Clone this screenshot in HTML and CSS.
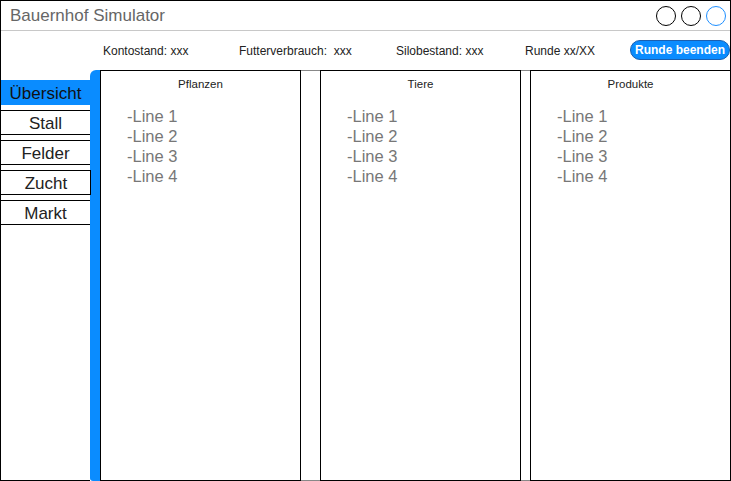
FILE: index.html
```html
<!DOCTYPE html>
<html lang="de">
<head>
<meta charset="utf-8">
<title>Bauernhof Simulator</title>
<link rel="stylesheet" href="styles.css">
</head>
<body>
<div class="frame">
  <header class="titlebar">
    <span class="title">Bauernhof Simulator</span>
    <div class="circles">
      <span class="circle"></span>
      <span class="circle"></span>
      <span class="circle blue"></span>
    </div>
  </header>
  <div class="stats">
    <span class="stat s1">Kontostand: xxx</span>
    <span class="stat s2">Futterverbrauch:&nbsp; xxx</span>
    <span class="stat s3">Silobestand: xxx</span>
    <span class="stat s4">Runde xx/XX</span>
    <button class="end-btn">Runde beenden</button>
  </div>
  <div class="main">
    <nav class="sidebar">
      <div class="nav-item active">Übersicht</div>
      <div class="nav-item">Stall</div>
      <div class="nav-item">Felder</div>
      <div class="nav-item boxed">Zucht</div>
      <div class="nav-item">Markt</div>
    </nav>
    <div class="bluebar"></div>
    <div class="content">
      <section class="panel p1">
        <div class="panel-title">Pflanzen</div>
        <ul class="lines"><li>-Line 1</li><li>-Line 2</li><li>-Line 3</li><li>-Line 4</li></ul>
      </section>
      <section class="panel p2">
        <div class="panel-title">Tiere</div>
        <ul class="lines"><li>-Line 1</li><li>-Line 2</li><li>-Line 3</li><li>-Line 4</li></ul>
      </section>
      <section class="panel p3">
        <div class="panel-title">Produkte</div>
        <ul class="lines"><li>-Line 1</li><li>-Line 2</li><li>-Line 3</li><li>-Line 4</li></ul>
      </section>
    </div>
  </div>
</div>
</body>
</html>
```
FILE: styles.css
```css
* { box-sizing: border-box; }
html, body { margin: 0; padding: 0; background: #fff; }
body { font-family: "Liberation Sans", Arial, sans-serif; }

.frame {
  width: 731px;
  height: 481px;
  border: 1px solid #000;
  border-bottom: none;
  display: flex;
  flex-direction: column;
  overflow: hidden;
}

.titlebar {
  height: 30px;
  border-bottom: 1px solid #c8c8c8;
  display: flex;
  align-items: center;
  justify-content: space-between;
  padding: 0 4px 0 9px;
  flex: none;
}
.title { font-size: 17px; color: #666; padding-top: 1px; }
.circles { display: flex; gap: 5px; padding-top: 1px; }
.circle {
  width: 20px; height: 20px;
  border: 1px solid #000;
  border-radius: 50%;
  display: block;
}
.circle.blue { border-color: #1e8fff; }

.stats {
  height: 39px;
  flex: none;
  display: flex;
  align-items: center;
  padding-left: 102px;
  font-size: 12px;
  color: #222;
}
.stat { display: block; }
.s1 { width: 136px; }
.s2 { width: 157px; }
.s3 { width: 129px; }
.s4 { width: 105px; }
.end-btn {
  width: 100px;
  height: 20px;
  border-radius: 10px;
  border: 1px solid #1a5fb0;
  background: #0a8cff;
  color: #fff;
  font-family: "Liberation Sans", Arial, sans-serif;
  font-weight: bold;
  font-size: 12px;
  padding: 0;
  margin-top: -1px;
}

.main {
  flex: 1;
  display: flex;
  min-height: 0;
}

.sidebar {
  width: 89px;
  flex: none;
  padding-top: 10px;
  border-bottom: 1px solid #000;
  display: flex;
  flex-direction: column;
  gap: 5px;
}
.nav-item {
  height: 25px;
  border-top: 1px solid #000;
  border-bottom: 1px solid #000;
  font-size: 17px;
  color: #222;
  display: flex;
  align-items: center;
  justify-content: center;
  margin-left: -1px;
  padding-left: 1px;
  padding-top: 2px;
}
.nav-item.active {
  background: #0a8cff;
  border-color: #0a8cff;
  color: #111;
}
.nav-item.boxed {
  border: 1px solid #000;
  margin-right: -1px;
  position: relative;
  z-index: 2;
}

.bluebar {
  width: 10px;
  flex: none;
  background: #0a8cff;
  border-top-left-radius: 6px;
  border-bottom-left-radius: 3px;
}

.content {
  flex: 1;
  display: flex;
  border-top: 1px solid #888;
  border-bottom: 1px solid #888;
}
.panel {
  width: 201px;
  border: 1px solid #000;
  margin-top: -1px;
  margin-bottom: -1px;
  flex: none;
}
.p2 { margin-left: 19px; }
.p3 { margin-left: 9px; margin-right: -1px; }

.panel-title {
  text-align: center;
  font-size: 11.5px;
  color: #222;
  padding-top: 7px;
  height: 35px;
}
.lines {
  list-style: none;
  margin: 0;
  padding: 0 0 0 26px;
  font-size: 16.5px;
  line-height: 20px;
  color: #777;
}
```
